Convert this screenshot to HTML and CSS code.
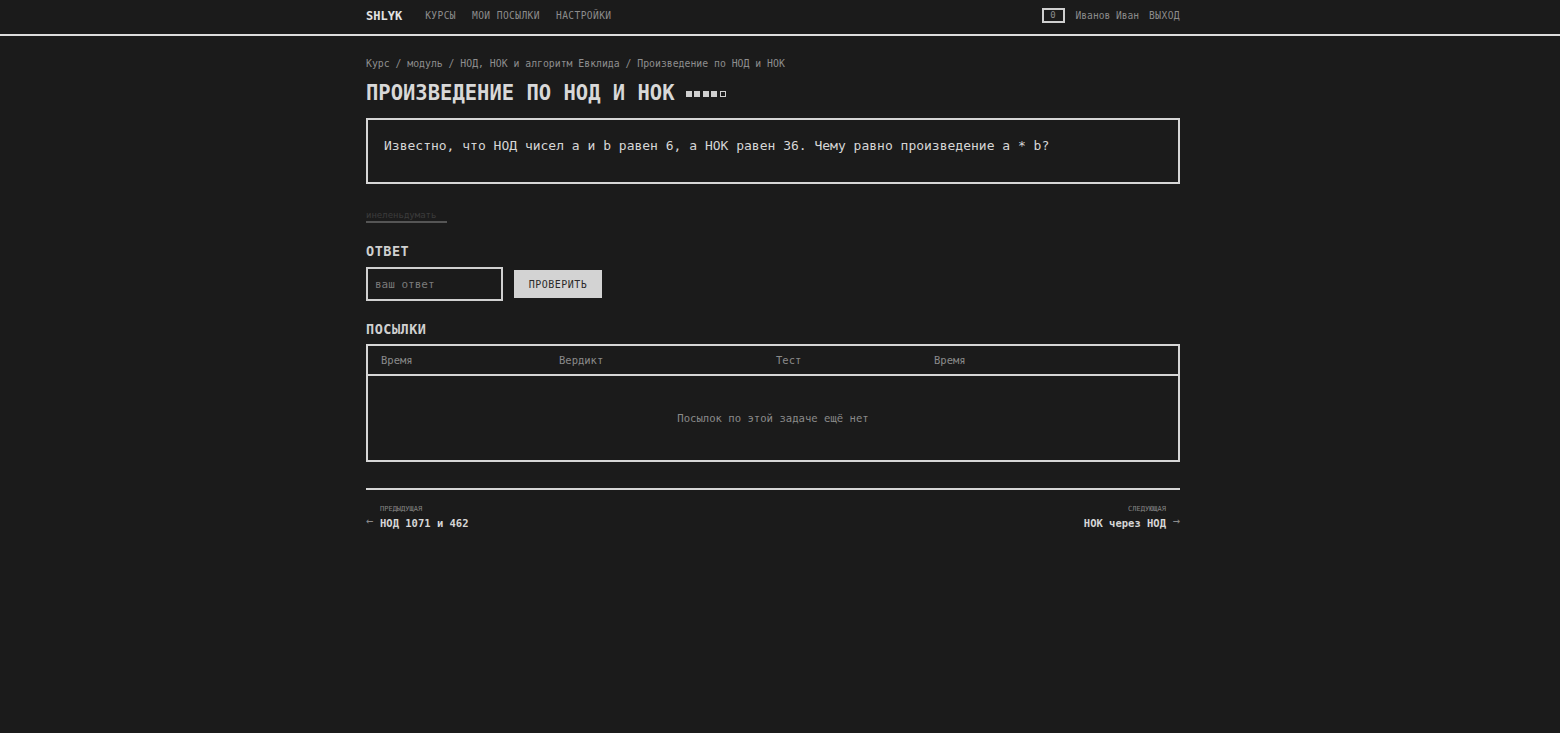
FILE: index.html
```html
<!DOCTYPE html>
<html lang="ru">
<head>
    <meta charset="UTF-8">
    <meta name="viewport" content="width=device-width, initial-scale=1.0">
    <title>Произведение по НОД и НОК</title>
    <link rel="stylesheet" href="styles.css">
</head>
<body>

<header class="topbar">
    <div class="wrap topbar-inner">
        <nav class="nav">
            <a class="logo" href="#">SHLYK</a>
            <a href="#">курсы</a>
            <a href="#">мои посылки</a>
            <a href="#">настройки</a>
        </nav>
        <div class="user">
            <span class="counter">0</span>
            <span class="username">Иванов Иван</span>
            <a href="#" class="logout">выход</a>
        </div>
    </div>
</header>

<main class="wrap">
    <div class="crumbs">Курс / модуль / НОД, НОК и алгоритм Евклида / Произведение по НОД и НОК</div>

    <h1 class="title">
        Произведение по НОД и НОК
        <span class="level">
            <i class="on"></i><i class="on"></i><i class="on"></i><i class="on"></i><i></i>
        </span>
    </h1>

    <div class="problem">
        Известно, что НОД чисел a и b равен 6, а НОК равен 36. Чему равно произведение a * b?
    </div>

    <a href="#" class="hint">инеленьдумать</a>

    <h3 class="section">Ответ</h3>
    <form class="answer" onsubmit="return false">
        <input type="text" placeholder="ваш ответ">
        <button type="submit">Проверить</button>
    </form>

    <h3 class="section">Посылки</h3>
    <div class="subs">
        <div class="subs-head">
            <span>Время</span>
            <span>Вердикт</span>
            <span>Тест</span>
            <span>Время</span>
        </div>
        <div class="subs-empty">Посылок по этой задаче ещё нет</div>
    </div>

    <div class="pager">
        <a href="#" class="pager-link">
            <span class="arrow">&larr;</span>
            <span>
                <span class="pager-label">предыдущая</span>
                <span class="pager-name">НОД 1071 и 462</span>
            </span>
        </a>
        <a href="#" class="pager-link next">
            <span>
                <span class="pager-label">следующая</span>
                <span class="pager-name">НОК через НОД</span>
            </span>
            <span class="arrow">&rarr;</span>
        </a>
    </div>
</main>

</body>
</html>
```

FILE: styles.css
```css
body {
    font-family: 'DejaVu Sans Mono', 'Liberation Mono', monospace;
    background-color: #1b1b1b;
    color: #cfcfcf;
    margin: 0;
    padding: 0;
}
a {
    color: inherit;
    text-decoration: none;
}
.wrap {
    width: 814px;
    margin: 0 auto;
    position: relative;
    left: -7px;
}

/* top bar */
.topbar {
    border-bottom: 2px solid #dcdcdc;
    height: 34px;
}
.topbar-inner {
    display: flex;
    justify-content: space-between;
    align-items: center;
    height: 31px;
}
.nav {
    display: flex;
    align-items: center;
    gap: 16px;
}
.nav a {
    font-size: 9.6px;
    letter-spacing: 0.4px;
    text-transform: uppercase;
    color: #8c8c8c;
}
.nav .logo {
    font-size: 12px;
    letter-spacing: 0;
    font-weight: bold;
    color: #e2e2e2;
    margin-right: 7px;
}
.user {
    display: flex;
    align-items: center;
    gap: 10px;
    font-size: 9.6px;
    color: #8c8c8c;
}
.counter {
    border: 2px solid #cfcfcf;
    width: 19px;
    height: 11px;
    line-height: 11px;
    text-align: center;
    font-size: 9px;
    margin-right: 1px;
}
.logout {
    text-transform: uppercase;
    letter-spacing: 0.4px;
}

/* content */
.crumbs {
    font-size: 9.8px;
    line-height: 14px;
    color: #8e8e8e;
    margin-top: 21px;
}
.title {
    font-size: 20.5px;
    line-height: 24px;
    text-transform: uppercase;
    color: #d8d8d8;
    margin: 10px 0 13px;
    display: flex;
    align-items: center;
    gap: 11px;
}
.level {
    display: inline-flex;
    gap: 2.5px;
    margin-top: 2px;
}
.level i {
    width: 4px;
    height: 4px;
    border: 1px solid #cfcfcf;
}
.level i.on {
    background-color: #cfcfcf;
}
.problem {
    border: 2px solid #d6d6d6;
    padding: 18px 16px 28px;
    font-size: 13px;
    line-height: 16px;
    color: #d6d6d6;
}
.hint {
    display: inline-block;
    margin-top: 25px;
    font-size: 9px;
    line-height: 12px;
    color: #3c3c3c;
    border-bottom: 2px solid #555;
    padding-right: 11px;
}
.section {
    font-size: 13.5px;
    line-height: 18px;
    letter-spacing: 0.5px;
    text-transform: uppercase;
    color: #d0d0d0;
    margin: 19px 0 7px;
}
.answer {
    display: flex;
    align-items: center;
    gap: 11px;
}
.answer input {
    width: 137px;
    height: 34px;
    box-sizing: border-box;
    border: 2px solid #d0d0d0;
    background-color: #1b1b1b;
    color: #d0d0d0;
    padding: 0 7px;
    font-family: inherit;
    font-size: 11px;
    outline: none;
}
.answer input::placeholder {
    color: #7a7a7a;
}
.answer button {
    width: 88px;
    height: 28px;
    border: none;
    background-color: #d3d3d3;
    color: #2a2a2a;
    font-family: inherit;
    font-size: 10px;
    letter-spacing: 0.5px;
    text-transform: uppercase;
    cursor: pointer;
}

/* submissions */
.subs {
    border: 2px solid #d6d6d6;
    margin-top: -1px;
}
.subs-head {
    display: grid;
    grid-template-columns: 178px 217px 158px 1fr;
    padding: 0 13px;
    height: 28px;
    align-items: center;
    font-size: 10.5px;
    color: #8a8a8a;
    border-bottom: 2px solid #d6d6d6;
}
.subs-empty {
    height: 84px;
    display: flex;
    align-items: center;
    justify-content: center;
    font-size: 10.6px;
    color: #8a8a8a;
}

/* pager */
.pager {
    margin-top: 26px;
    border-top: 2px solid #d6d6d6;
    padding-top: 15px;
    display: flex;
    justify-content: space-between;
}
.pager-link {
    display: flex;
    align-items: flex-end;
    gap: 6px;
}
.pager-link > span > span {
    display: block;
}
.pager-link.next {
    text-align: right;
}
.pager-label {
    font-size: 7px;
    line-height: 9px;
    text-transform: uppercase;
    color: #858585;
    margin-bottom: 2px;
}
.pager-name {
    font-size: 10.5px;
    line-height: 14px;
    font-weight: bold;
    color: #d6d6d6;
}
.arrow {
    width: 8px;
    font-size: 12px;
    line-height: 14px;
    color: #8a8a8a;
    margin-bottom: 2px;
}
```
